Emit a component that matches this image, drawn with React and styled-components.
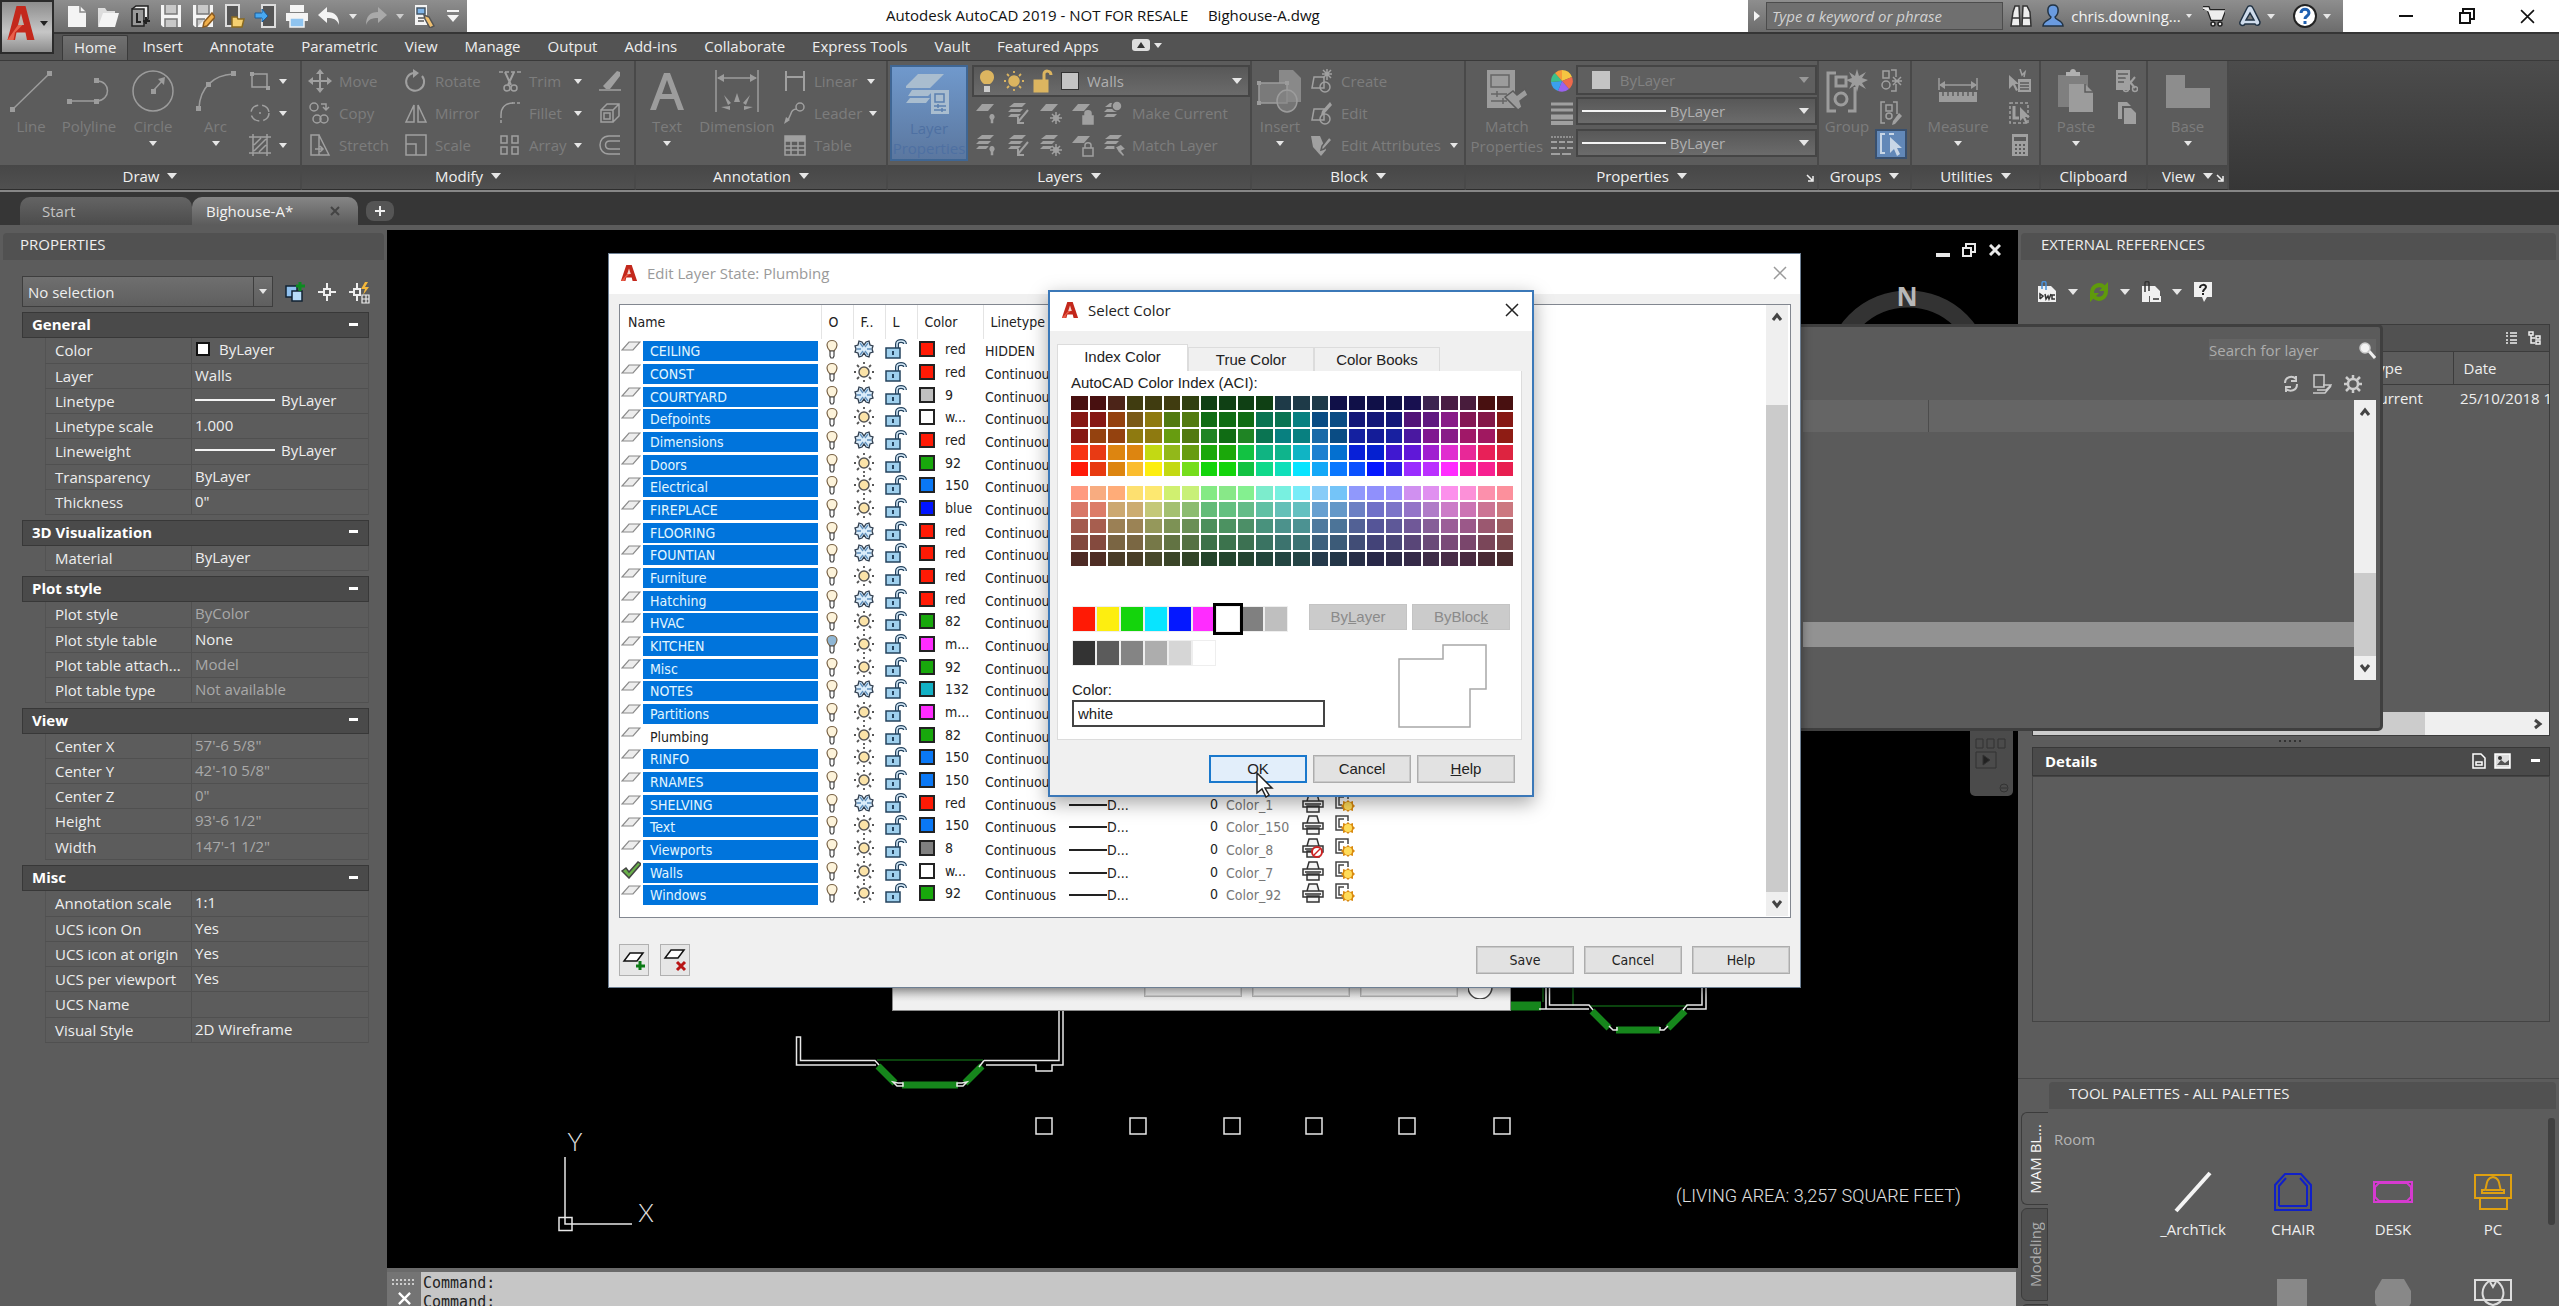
import React from "react";
import styled, { createGlobalStyle, css } from "styled-components";

const UI = `"Open Sans", "Noto Sans", sans-serif`;
const LIST = `"DejaVu Sans Condensed", "Noto Sans", sans-serif`;
const CLASSIC = `"Liberation Sans", Arial, sans-serif`;

const Global = createGlobalStyle`
  *, *::before, *::after { box-sizing: border-box; }
  html, body { margin: 0; height: 100%; overflow: hidden; background: #363636; }
  button, input, select { font: inherit; color: inherit; margin: 0; padding: 0; border: 0; background: none; border-radius: 0; }
  button { display: inline-flex; align-items: center; justify-content: center; white-space: nowrap; }
  select { appearance: none; }
  svg { display: block; flex: none; }
  table { border-collapse: collapse; border-spacing: 0; }
`;

/* ---------- shared pieces ---------- */

const Svg = ({ w = 24, h = w, vb, children, ...rest }) => (
  <svg width={w} height={h} viewBox={vb || `0 0 ${w} ${h}`} fill="none" stroke="currentColor" strokeWidth="1.5" aria-hidden="true" {...rest}>
    {children}
  </svg>
);

const Caret = styled.span`
  flex: none;
  width: 0;
  height: 0;
  border: ${(p) => p.$s || 4}px solid transparent;
  border-top: ${(p) => (p.$s || 4) + 1}px solid ${(p) => p.$c || "#e6e6e6"};
  border-bottom: 0;
`;

/* ---------- frame ---------- */

const Frame = styled.div`
  position: relative;
  height: 100vh;
  display: flex;
  flex-direction: column;
  font: 15px/20px ${UI};
  color: #eee;
  background: #5c5c5c;
`;

const TitleBar = styled.header`
  display: flex;
  height: 32px;
  flex: none;
  background: #fff;
`;
const metal = css`background: linear-gradient(#8e8e8e, #6c6c6c);`;
const QuickBar = styled.div`
  ${metal}
  display: flex;
  align-items: center;
  width: 467px;
  padding-left: 61px;
  color: #f4f4f4;
`;
const QuickButton = styled.button`
  width: ${(p) => p.$w || 32}px;
  height: 32px;
  color: ${(p) => (p.$dim ? "#a9a9a9" : "#f4f4f4")};
`;
const WindowTitle = styled.h1`
  flex: 1;
  margin: 0;
  padding-left: 419px;
  font: 15px/30px ${UI};
  color: #111;
  white-space: pre;
`;
const InfoBar = styled.div`
  ${metal}
  display: flex;
  align-items: center;
  width: 595px;
  color: #f4f4f4;
`;
const SearchInput = styled.input`
  width: 239px;
  height: 28px;
  margin-right: 2px;
  padding-left: 5px;
  border: 1px solid #4c4c4c;
  background: #6f6f6f;
  font-style: italic;
  &::placeholder { color: #d2d2d2; }
`;
const InfoButton = styled.button`
  width: ${(p) => p.$w || 32}px;
  height: 30px;
  gap: 5px;
`;
const WindowButtons = styled.div`
  display: flex;
  width: 216px;
  padding-left: 32px;
  color: #111;
  button { width: 61px; height: 32px; }
`;

const AppMenu = styled.button`
  position: absolute;
  z-index: 2;
  left: 0;
  top: 0;
  width: 54px;
  height: 54px;
  border: 2px solid #2b2b2b;
  background: linear-gradient(#8d8d8d, #c6c6c6 60%, #8c8c8c);
  gap: 4px;
  padding-bottom: 8px;
`;

const MenuBar = styled.nav`
  display: flex;
  align-items: flex-end;
  flex: none;
  height: 28px;
  padding-left: 62px;
  background: #535353;
  border-top: 2px solid #353535;
`;
const MenuTab = styled.button`
  height: 25px;
  margin-right: 1px;
  padding: 0 13px 4px;
  ${(p) => p.$on && css`
    padding: 0 11px 3px;
    margin-right: 1px;
    background: linear-gradient(#707070, #5f5f5f);
    border: 1px solid #3a3a3a;
    border-bottom: 0;
    border-radius: 2px 2px 0 0;
  `}
`;

/* ---------- ribbon ---------- */

const Ribbon = styled.section`
  display: flex;
  flex: none;
  height: 132px;
  background: linear-gradient(#4c4c4c, #363636);
  border-top: 1px solid #3a3a3a;
  border-bottom: 2px solid #868686;
`;
const Panel = styled.section`
  display: flex;
  flex-direction: column;
  width: ${(p) => p.$w}px;
  background: #5c5c5c;
  border-right: 2px solid #494949;
  border-bottom: 1px solid #2e2e2e;
`;
const PanelBody = styled.div`
  display: flex;
  flex: 1;
  padding: 4px 0 0 ${(p) => p.$pad || 0}px;
  color: #7d7d7d;
`;
const PanelTitle = styled.button`
  position: relative;
  height: 24px;
  padding-bottom: 2px;
  gap: 8px;
  color: #f0f0f0;
  background: linear-gradient(#474747, #505050);
  svg { position: absolute; right: 3px; top: 9px; }
`;
const BigButton = styled.button`
  width: ${(p) => p.$w}px;
  height: 96px;
  flex-direction: column;
  justify-content: flex-start;
  line-height: 20px;
  color: #7d7d7d;
  span.art { height: 51px; display: flex; align-items: center; color: #9c9c9c; }
  i { margin-top: 5px; }
  ${(p) => p.$blue && css`
    background: linear-gradient(#7099cc, #5b779f);
    border: 2px solid #3f6694;
    margin: 0 4px 0 2px;
    color: #4e70a2;
    span.art { color: #a9bdcf; }
  `}
`;
const Column = styled.div`
  display: flex;
  flex-direction: column;
  width: ${(p) => p.$w}px;
  margin-left: ${(p) => p.$ml || 0}px;
`;
const Tool = styled.button`
  height: 32px;
  justify-content: flex-start;
  gap: 7px;
  color: #7d7d7d;
  svg { color: #a0a0a0; }
  ${(p) => p.$blue && css`
    justify-content: center;
    height: 30px;
    border: 2px solid #39506e;
    background: #6288b8;
    svg { color: #c8d6e6; }
  `}
  ${(p) => p.$mid && css`justify-content: center;`}
`;
const ToolLabel = styled.span`
  flex: ${(p) => (p.$grow ? 1 : "none")};
  text-align: left;
`;
const ToolRow = styled.div`
  display: flex;
  padding-left: 3px;
  button { width: 32px; }
  button:last-child { width: auto; gap: 5px; }
`;
const Combo = styled.label`
  display: flex;
  align-items: center;
  height: ${(p) => p.$h || 28}px;
  margin-bottom: ${(p) => p.$mb || 0}px;
  padding: 0 6px 0 ${(p) => p.$pl || 4}px;
  gap: ${(p) => p.$gap || 8}px;
  border: 2px solid #454545;
  background: ${(p) => (p.$flat ? "#5f5f5f" : "linear-gradient(#585858, #6b6b6b)")};
  color: ${(p) => (p.$flat ? "#828282" : "#b0b0b0")};
  select { flex: 1; min-width: 0; }
`;
const Swatch = styled.span`
  width: 18px;
  height: 18px;
  background: #c4c4c4;
  border: 1px solid ${(p) => p.$b || "#c4c4c4"};
`;
const Rule = styled.span`
  flex: none;
  width: ${(p) => p.$w}px;
  height: 2px;
  background: ${(p) => p.$c || "#f4f4f4"};
`;

/* ---------- document tabs ---------- */

const DocTabs = styled.nav`
  display: flex;
  align-items: flex-end;
  flex: none;
  height: 38px;
  padding-left: 20px;
  background: #363636;
  border-bottom: 5px solid #5c5c5c;
`;
const DocTab = styled.button`
  width: ${(p) => p.$w}px;
  height: 28px;
  justify-content: space-between;
  padding: 0 18px 0 ${(p) => p.$pl}px;
  border-radius: 10px 10px 0 0;
  color: ${(p) => (p.$on ? "#f2f2f2" : "#c4c4c4")};
  background: ${(p) => (p.$on ? "linear-gradient(#868686, #5c5c5c)" : "linear-gradient(#646464, #4c4c4c)")};
`;
const AddTab = styled.button`
  width: 28px;
  height: 20px;
  margin: 0 0 4px 8px;
  border-radius: 8px;
  background: #555;
`;

/* ---------- palettes ---------- */

const Workspace = styled.main`
  display: grid;
  grid-template-columns: 387px minmax(0, 1fr) 541px;
  flex: 1;
  min-height: 0;
`;
const Palette = styled.aside`
  display: flex;
  flex-direction: column;
  min-height: 0;
  overflow: hidden;
  background: #5c5c5c;
`;
const PaletteTitle = styled.h2`
  flex: none;
  margin: 3px 3px 0 ${(p) => p.$ml || 3}px;
  height: 27px;
  padding-left: ${(p) => p.$pl || 17}px;
  background: #515151;
  border-radius: 4px 4px 0 0;
  font: 15px/23px ${UI};
  color: #eee;
`;
const SelectionBar = styled.div`
  display: flex;
  align-items: center;
  margin: 16px 12px 5px 22px;
  height: 31px;
  button { width: 32px; height: 30px; }
`;
const SelectionBox = styled.label`
  display: flex;
  align-items: center;
  width: 252px;
  height: 31px;
  margin-right: 6px;
  padding-right: 5px;
  border: 1px solid #3e3e3e;
  background: linear-gradient(#6f6f6f, #5f5f5f);
  select { flex: 1; height: 29px; padding-left: 5px; border-right: 1px solid #3e3e3e; margin-right: 5px; }
`;
const Section = styled.section`
  margin: 0 18px 5px 22px;
`;
const SectionHead = styled.h3`
  display: flex;
  justify-content: space-between;
  align-items: center;
  height: 26px;
  margin: 0;
  padding: 0 10px 2px 9px;
  border: 1px solid #383838;
  background: #4a4a4a;
  font: bold 15px/20px ${UI};
  color: #fff;
`;
const PropTable = styled.table`
  width: calc(100% - 23px);
  margin-left: 23px;
  table-layout: fixed;
  border-left: 1px solid #535353;
  tr { height: 25px; border-bottom: 1px solid #505050; }
  tr:nth-child(5n) { height: 26px; }
  th { width: 146px; padding: 0 0 0 9px; font-weight: 400; text-align: left; border-right: 1px solid #505050; white-space: nowrap; }
  td { padding: 0 0 0 3px; border-right: 1px solid #535353; }
`;
const Value = styled.span`
  display: flex;
  align-items: center;
  gap: ${(p) => p.$gap || 6}px;
  height: 20px;
  margin-bottom: 2px;
  color: ${(p) => (p.$dim ? "#a9a9a9" : "#eee")};
`;
const ColorBox = styled.span`
  width: 14px;
  height: 14px;
  margin-left: 1px;
  background: #fff;
  border: 2px solid #111;
`;

/* ---------- drawing ---------- */

const Center = styled.div`
  display: flex;
  flex-direction: column;
  min-width: 0;
`;
const Canvas = styled.div`
  position: relative;
  flex: 1;
  min-height: 0;
  overflow: hidden;
  background: #000;
  svg.plan { width: 100%; height: 100%; }
`;
const DocButtons = styled.div`
  position: absolute;
  right: 10px;
  top: 9px;
  display: flex;
  color: #e8e8e8;
  button { width: 26px; height: 22px; }
`;
const CommandLine = styled.div`
  display: flex;
  flex: none;
  height: 38px;
  margin-right: 2px;
  border-top: 4px solid #6a6a6a;
  background: #c6c6c6;
  overflow: hidden;
`;
const CommandGrip = styled.div`
  display: flex;
  flex-direction: column;
  align-items: center;
  gap: 6px;
  width: 34px;
  padding-top: 6px;
  background: #747474;
  color: #fff;
`;
const CommandText = styled.pre`
  margin: 2px 0 0 2px;
  font: 15px/19px "DejaVu Sans Mono", monospace;
  color: #222;
`;

/* ---------- right column ---------- */

const RefToolbar = styled.div`
  display: flex;
  align-items: center;
  height: 64px;
  padding: 0 0 0 15px;
  button { width: 28px; height: 26px; }
  button.more { width: 24px; }
`;
const RefBox = styled.div`
  display: flex;
  flex-direction: column;
  height: 412px;
  margin: 0 9px 0 14px;
  border: 1px solid #3c3c3c;
  overflow: hidden;
`;
const RefViews = styled.div`
  display: flex;
  justify-content: flex-end;
  align-items: center;
  gap: 10px;
  height: 27px;
  padding-right: 8px;
  background: #515151;
  border-bottom: 1px solid #3c3c3c;
`;
const RefTable = styled.table`
  width: 100%;
  table-layout: fixed;
  text-align: left;
  th { height: 32px; padding-bottom: 1px; font-weight: 400; border-bottom: 1px solid #3c3c3c; }
  th + th { border-left: 1px solid #3c3c3c; padding-left: 10px; }
  td { height: 28px; white-space: nowrap; padding: 0 0 0 7px; }
  th:first-child, td:first-child { padding-left: 336px; }
`;
const HScroll = styled.div`
  display: flex;
  align-items: center;
  justify-content: flex-end;
  height: 23px;
  margin-top: auto;
  padding-right: 5px;
  color: #444;
  background: linear-gradient(90deg, #ccc 392px, #efefef 392px);
`;
const Splitter = styled.div`
  display: flex;
  align-items: center;
  justify-content: center;
  height: 11px;
  margin: 0 9px 0 14px;
`;
const DetailsHead = styled.h3`
  display: flex;
  align-items: center;
  gap: 8px;
  height: 29px;
  margin: 0 9px 0 14px;
  padding: 0 8px 2px 12px;
  border: 1px solid #383838;
  background: #4a4a4a;
  font: bold 15px/20px ${UI};
  color: #fff;
  span { flex: 1; }
`;
const DetailsBody = styled.div`
  height: 246px;
  margin: 0 9px 56px 14px;
  border: 1px solid #444;
`;
const ToolPalette = styled.section`
  display: flex;
  flex: 1;
  min-height: 0;
  border-top: 1px solid #484848;
`;
const SideTabs = styled.div`
  width: 30px;
  padding: 33px 0 0 3px;
`;
const SideTab = styled.button`
  width: 27px;
  height: 93px;
  writing-mode: vertical-rl;
  font: 15px/24px ${UI};
  border: 1px solid #3c3c3c;
  border-radius: 6px 0 0 6px;
  color: ${(p) => (p.$on ? "#f4f4f4" : "#ababab")};
  background: ${(p) => (p.$on ? "#5c5c5c" : "#505050")};
  border-right: ${(p) => (p.$on ? 0 : 1)}px solid #3c3c3c;
  span { transform: rotate(180deg); }
`;
const ToolArea = styled.div`
  flex: 1;
  min-width: 0;
`;
const ToolGroup = styled.p`
  margin: 20px 0 16px 6px;
  color: #b4b4b4;
`;
const ToolGrid = styled.div`
  display: grid;
  grid-template-columns: repeat(4, 100px);
  padding-left: 95px;
  row-gap: 32px;
  button { flex-direction: column; height: 80px; justify-content: flex-start; color: #eee; }
  button span { display: flex; height: 54px; align-items: center; }
`;
const ToolBody = styled.div`
  display: flex;
  justify-content: space-between;
`;
const ToolThumb = styled.div`
  width: 7px;
  height: 107px;
  margin: 9px 4px 0 0;
  border-radius: 3px;
  background: #404040;
`;

/* ---------- floating windows ---------- */

const LayerManager = styled.section`
  position: absolute;
  left: 1790px;
  top: 324px;
  width: 593px;
  height: 407px;
  padding: 0 4px 0 10px;
  display: flex;
  flex-direction: column;
  background: #5b5b5b;
  border: 3px solid #3f3f3f;
  border-radius: 0 5px 5px 0;
`;
const LayerSearch = styled.label`
  display: flex;
  align-items: center;
  align-self: flex-end;
  width: 167px;
  height: 21px;
  margin: 12px 0 0 0;
  background: #646464;
  input { flex: 1; min-width: 0; &::placeholder { color: #adadad; } }
`;
const LayerTools = styled.div`
  display: flex;
  justify-content: flex-end;
  align-items: center;
  height: 40px;
  padding: 8px 8px 0 0;
  color: #ccc;
  button { width: 31px; height: 26px; }
`;
const LayerList = styled.div`
  display: flex;
  height: 280px;
`;
const LayerRows = styled.div`
  flex: 1;
`;
const LayerHeader = styled.div`
  height: 32px;
  margin-bottom: 190px;
  background: linear-gradient(90deg, #656565 125px, #4c4c4c 125px, #4c4c4c 126px, #656565 126px);
`;
const LayerHit = styled.div`
  height: 25px;
  background: #929292;
`;
const VScroll = styled.div`
  display: flex;
  flex-direction: column;
  justify-content: space-between;
  align-items: center;
  width: 22px;
  padding: 6px 0;
  color: #444;
  background: linear-gradient(#efefef ${(p) => p.$a}px, #cbcbcb ${(p) => p.$a}px, #cbcbcb ${(p) => p.$b}px, #efefef ${(p) => p.$b}px);
`;

const StatesDialog = styled.section`
  position: absolute;
  left: 892px;
  top: 960px;
  width: 619px;
  height: 51px;
  display: flex;
  align-items: flex-start;
  justify-content: flex-end;
  gap: 10px;
  padding: 8px 0 0 0;
  background: linear-gradient(#cfcfcf 26px, #f0f0f0 40px);
  border: 1px solid #8a8a8a;
  color: #222;
`;
const EditDialog = styled.section`
  position: absolute;
  left: 608px;
  top: 253px;
  width: 1193px;
  height: 735px;
  display: flex;
  flex-direction: column;
  background: #f0f0f0;
  border: 1px solid #6d7f93;
  box-shadow: 0 2px 10px rgba(0, 0, 0, 0.45);
  font: 14px/18px ${LIST};
  color: #222;
`;
const DialogTitle = styled.h2`
  display: flex;
  align-items: center;
  gap: 9px;
  height: ${(p) => p.$h}px;
  margin: 0;
  padding: 0 10px 3px 11px;
  background: #fff;
  font: 15px/20px ${UI};
  color: ${(p) => (p.$off ? "#9a9a9a" : "#222")};
  span { flex: 1; }
  button { width: 20px; height: 20px; }
`;
const ListFrame = styled.div`
  display: flex;
  justify-content: space-between;
  height: 614px;
  margin: 10px 9px 0 10px;
  padding: 0 2px 1px 1px;
  border: 1px solid #828790;
  background: #fff;
`;
const LayerTable = styled.table`
  width: 744px;
  height: 100px;
  table-layout: fixed;
  th { height: 34px; padding: 0 0 0 7px; font-weight: 400; text-align: left; border-right: 1px solid #e4e4e4; white-space: nowrap; }
  th:nth-child(n + 6) { border-right: 0; }
  tbody tr { height: 23px; }
  tbody tr:nth-child(3n) { height: 22px; }
  td { padding: 0; white-space: nowrap; overflow: hidden; vertical-align: top; }
  td:nth-child(3) { padding-left: 4px; }
`;
const NameTag = styled.span`
  display: block;
  height: 20px;
  margin: 2px 3px 0 0;
  padding-left: 7px;
  line-height: 21px;
  color: ${(p) => (p.$plain ? "#222" : "#e2f6ff")};
  background: ${(p) => (p.$plain ? "#fff" : "#0074dc")};
`;
const CellText = styled.span`
  display: flex;
  align-items: center;
  height: 20px;
  padding-left: ${(p) => p.$pl || 0}px;
  color: ${(p) => p.$c || "#222"};
  margin-top: ${(p) => p.$mt || 0}px;
`;
const Chip = styled.span`
  width: 16px;
  height: 16px;
  margin-right: 10px;
  border: 2px solid #222;
  background: ${(p) => p.$c};
`;
const DialogFoot = styled.footer`
  display: flex;
  align-items: center;
  gap: 10px;
  padding: 26px 10px 0 10px;
  div { flex: 1; display: flex; gap: 11px; }
`;
const IconButton = styled.button`
  width: 30px;
  height: 32px;
  border: 1px solid #b0b0b0;
  background: #e6e6e6;
`;
const PushButton = styled.button`
  width: 98px;
  height: 28px;
  border: 1px solid #adadad;
  background: #e2e2e2;
  box-shadow: inset 0 0 0 1px #c8c8c8;
  color: #222;
  ${(p) => p.$focus && css`
    border: 2px solid #1a78cc;
    background: #e2eefa;
    box-shadow: none;
  `}
  ${(p) => p.$off && css`
    height: 26px;
    border-color: #c4c4c4;
    background: #cbcbcb;
    box-shadow: none;
    color: #8a8a8a;
  `}
`;

const ColorDialog = styled.section`
  position: absolute;
  left: 1048px;
  top: 290px;
  width: 486px;
  height: 507px;
  display: flex;
  flex-direction: column;
  border: 2px solid #3b78b8;
  background: #f0f0f0;
  box-shadow: 0 6px 18px rgba(0, 0, 0, 0.35);
  font: 15px/18px ${CLASSIC};
  color: #222;
`;
const ColorTabs = styled.div`
  display: flex;
  align-items: flex-end;
  height: 40px;
  padding-left: 7px;
`;
const ColorTab = styled.button`
  width: ${(p) => p.$w}px;
  height: ${(p) => (p.$on ? 27 : 24)}px;
  padding-bottom: ${(p) => (p.$on ? 3 : 0)}px;
  border: 1px solid #dcdcdc;
  border-bottom: 0;
  background: ${(p) => (p.$on ? "#fff" : "#f0f0f0")};
`;
const ColorPage = styled.div`
  height: 369px;
  margin: 0 10px 0 7px;
  padding: 3px 7px 0 13px;
  border: 1px solid #dcdcdc;
  border-top: 0;
  background: #fff;
`;
const AciLabel = styled.p`
  margin: 0 0 4px;
`;
const Aci = styled.div`
  display: grid;
  grid-template-columns: repeat(24, 1fr);
  grid-template-rows: repeat(5, 1fr);
  gap: 2px;
  height: 80px;
  margin: 0 1px 10px 0;
`;
const AciCell = styled.button`
  background: ${(p) => p.$c};
`;
const PickArea = styled.div`
  display: flex;
  justify-content: space-between;
  padding: 28px 4px 0 1px;
`;
const PickLeft = styled.div`
  width: 214px;
  padding-top: 3px;
  label { display: flex; flex-direction: column; width: 253px; gap: 1px; margin-top: 16px; }
  input { height: 27px; padding-left: 4px; border: 2px solid #444; background: #fff; }
`;
const PickRight = styled.div`
  display: flex;
  flex-direction: column;
  align-items: flex-end;
  gap: 14px;
  > svg { margin-right: 22px; }
`;
const BasicColors = styled.div`
  display: grid;
  grid-template-columns: repeat(9, 22px);
  gap: 10px 2px;
  padding-left: 1px;
`;
const BasicCell = styled.button`
  height: 24px;
  background: ${(p) => p.$c};
  box-shadow: 0 0 0 1px #eee;
  ${(p) => p.$on && css`outline: 3px solid #000; outline-offset: 1px; z-index: 1;`}
`;
const ByButtons = styled.div`
  display: flex;
  gap: 5px;
`;
const ColorFoot = styled.div`
  display: flex;
  justify-content: flex-end;
  gap: 6px;
  padding: 15px 17px 0 0;
`;
const Pointer = styled.div`
  position: absolute;
  left: 1256px;
  top: 772px;
`;

/* ---------- icons ---------- */

const F = { fill: "currentColor", stroke: "none" };

const Logo = ({ w = 20 }) => (
  <Svg w={w} h={w} vb="0 0 20 20" stroke="none">
    <path d="M1 19 7 1h6l6 18h-5l-1-4H7l-1 4z" fill="#c3281c" />
    <path d="M8 11h4l-2-6z" fill="#f5d6cf" />
    <path d="M1 19 8 11h3L6 15l-1 4z" fill="#e85a45" />
  </Svg>
);
const Close = ({ w = 14, s = 1.5 }) => (
  <Svg w={w} vb="0 0 14 14" strokeWidth={s}><path d="M1 1 13 13M13 1 1 13" /></Svg>
);
const Chev = ({ d = "up" }) => {
  const r = { up: 0, right: 90, down: 180 }[d];
  return <Svg w={12} vb="0 0 12 12" strokeWidth="3"><path d="M2 9 6 4 10 9" transform={`rotate(${r} 6 6)`} /></Svg>;
};
const Launch = () => <Svg w={8} h={8} strokeWidth="1.5"><path d="M1 1 6 6M7 2v5H2" /></Svg>;
const Minus = () => <Svg w={9} h={3}><rect width="9" height="3" {...F} /></Svg>;

const art = {
  line: <Svg w={42} h={42}><path d="M3 39 39 4" /><path d="M0 37h5v5H0zM37 1h5v5h-5z" {...F} /></Svg>,
  pline: <Svg w={44} h={42}><path d="M2 31h28c14-1 14-20 0-20" /><path d="M0 29h5v5H0zM27 29h5v5h-5zM27 8h5v5h-5z" {...F} /></Svg>,
  circle: <Svg w={44} h={44}><circle cx="22" cy="22" r="20" /><path d="M22 22 32 11" /><path d="M20 20h5v5h-5zM34 8l-1 8-6-6z" {...F} /></Svg>,
  arc: <Svg w={42} h={42}><path d="M4 38C5 18 18 5 38 4" /><path d="M1 36h5v5H1zM11 12h5v5h-5zM36 1h5v5h-5z" {...F} /></Svg>,
  text: <Svg w={36} h={42}><path d="M1 40 15 3h6l14 37h-6l-4-11H11L7 40zM13 24h10L18 10z" {...F} fillRule="evenodd" /></Svg>,
  dim: <Svg w={44} h={44}><path d="M1 1v42M43 1v42M3 9h38" /><path d="m2 9 7-4v8zM42 9l-7-4v8z" {...F} /><path d="m22 24 3 9h-6zM9 26l7 8-3 2zM35 26l-7 8 3 2zM6 38l9-1v4zM38 38l-9-1v4z" {...F} /></Svg>,
  layerProps: <Svg w={46} h={46}><path d="M12 4h26L24 18H-2zM6 20h22l-6 6H2zM4 28h20l-4 5H0z" {...F} /><rect x="25" y="20" width="18" height="24" {...F} /><path d="M29 24h9v8h-9zM28 36h12M28 40h12M32 34v4M36 38v4" stroke="#5b80b0" /></Svg>,
  insert: <Svg w={46} h={44}><path d="M22 1h14l8 8v24H22z" {...F} opacity=".7" /><path d="M2 14h28v20H2z" fill="#7a7a7a" /><ellipse cx="30" cy="32" rx="10" ry="11" fill="#858585" fillOpacity=".6" /><path d="M0 12h4v4H0zM28 12h4v4h-4zM0 32h4v4H0z" {...F} /></Svg>,
  match: <Svg w={44} h={44}><path d="M2 1h28v38H2z" {...F} /><path d="M6 6h18v12H6zM6 25h16M6 32h16M12 22v6M18 29v6" stroke="#666" /><path d="m20 28 8-6 4 4 8-6 3 6-8 6 2 6-4 3z" {...F} stroke="#5c5c5c" /></Svg>,
  group: <Svg w={42} h={44}><path d="M10 4H2v38h8M22 42h7V18" strokeWidth="3" /><path d="M10 8h10v9H10z" strokeWidth="3" /><circle cx="15" cy="30" r="6" strokeWidth="3" /><path d="m31 0 2 7 7-4-4 6 6 2-6 3 4 6-7-4-2 7-2-7-6 4 3-6-6-3 6-2-3-6 6 4z" {...F} /></Svg>,
  measure: <Svg w={40} h={26}><path d="M1 0v12M39 0v12M2 7h36" /><path d="m1 7 6-4v8zM39 7l-6-4v8z" {...F} /><path d="M1 14h38v10H1z" {...F} /><path d="M5 14v4M10 14v4M15 14v4M20 14v4M25 14v4M30 14v4M35 14v4" stroke="#5c5c5c" /></Svg>,
  paste: <Svg w={38} h={44}><path d="M1 6h30v32H1z" {...F} opacity=".55" /><path d="M9 3h4c0-4 6-4 6 0h4v4H9z" {...F} fill="#b0b0b0" /><path d="M12 15h16l8 8v20H12z" {...F} /><path d="M28 15v8h8" stroke="#5c5c5c" /></Svg>,
  base: <Svg w={44} h={34}><path d="M0 1h19v13h25v20H0z" {...F} fill="#8d8d8d" /></Svg>,
};

const tool = {
  rect: <Svg><path d="M4 5h15v13H4z" /><path d="M2 3h4v4H2zM18 17h4v4h-4z" {...F} /></Svg>,
  ellipse: <Svg><ellipse cx="12" cy="12" rx="9" ry="8" strokeDasharray="10 4" /><circle cx="12" cy="12" r="1" {...F} /></Svg>,
  hatch: <Svg><path d="M5 1v22M19 1v22M1 4h22M1 20h22M6 12l7-7M6 18 18 6M11 19l7-7" /></Svg>,
  move: <Svg><path d="M12 3v18M3 12h18" strokeWidth="2" /><path d="m12 0 4 5H8zM12 24l4-5H8zM0 12l5-4v8zM24 12l-5-4v8z" {...F} /></Svg>,
  copy: <Svg><circle cx="6" cy="6" r="4" /><path d="M13 3h5v5M15 6l3 3 3-3" /><circle cx="9" cy="18" r="4" /><circle cx="16" cy="18" r="4" /></Svg>,
  stretch: <Svg><path d="M3 2h8v20H3zM11 2l10 20H11M7 16h8m-3-3 3 3-3 3" /></Svg>,
  rotate: <Svg><path d="M9 4a9 9 0 1 0 9 3" strokeWidth="2" /><path d="M9 0v9l6-5z" {...F} /></Svg>,
  mirror: <Svg><path d="M10 4v17H2zM14 4v17h8z" /></Svg>,
  scale: <Svg><path d="M2 2h20v20H2zM2 11h10v11H2z" /></Svg>,
  trim: <Svg><path d="M1 3h22" strokeDasharray="4 2" /><path d="m7 3 6 13M16 3l-6 13" strokeWidth="2" /><circle cx="9" cy="19" r="3" /><circle cx="16" cy="19" r="3" /></Svg>,
  fillet: <Svg><path d="M22 2h-8M3 22v-8" strokeDasharray="3 2" /><path d="M3 14C3 6 8 2 15 2" /></Svg>,
  array: <Svg><path d="M3 3h6v7H3zM14 3h6v7h-6zM3 14h6v7H3zM14 14h6v7h-6z" /></Svg>,
  erase: <Svg><path d="m19 2 3 1v4L12 20H8l-3-3z" {...F} /><path d="M1 21h22" /></Svg>,
  explode: <Svg><path d="M3 9h12v12H3zM6 12h6v6H6zM3 9l6-6h12v12l-6 6M15 9l6-6" /></Svg>,
  offset: <Svg><path d="M22 3H11C-1 3-1 21 11 21h11M22 8H12c-6 0-6 8 0 8h10" /></Svg>,
  linear: <Svg><path d="M3 2v20M21 2v20M4 8h16" strokeWidth="2" /></Svg>,
  leader: <Svg><circle cx="17" cy="6" r="4" /><path d="M14 8c-7 0-5 6-10 12" /><path d="m1 23 2-7 4 3z" {...F} /></Svg>,
  table: <Svg><path d="M2 3h20v19H2zM2 8h20M2 13h20M2 17h20M8 8v14M15 8v14" /><path d="M2 3h20v5H2z" {...F} /></Svg>,
  create: <Svg><path d="M4 8h10v11H2z" /><circle cx="15" cy="18" r="5" /><path d="M17 0v11M12 5h10M13 1l8 8M21 1l-8 8" /></Svg>,
  edit: <Svg><path d="M4 8h10v11H2z" /><circle cx="15" cy="18" r="5" /><path d="m20 1 2 3-8 9-3 1 1-4z" {...F} /></Svg>,
  attr: <Svg><path d="M1 3h9l6 14-5 6L3 14z" {...F} /><path d="m19 4 3 3-8 9-3 1 1-4z" {...F} stroke="#5c5c5c" /></Svg>,
  weight: <Svg><path d="M1 3h22M1 9h22" strokeWidth="3" /><path d="M1 16h22" strokeWidth="5" /><path d="M1 22h22" strokeWidth="4" /></Svg>,
  ltype: <Svg><path d="M1 4h22" strokeDasharray="2 1" /><path d="M1 9h22M1 15h22" strokeDasharray="6 2" strokeWidth="2" /><path d="M1 21h22" strokeWidth="2" strokeDasharray="9 2" /></Svg>,
  ungroup: <Svg><path d="M4 2h6v7H4z" /><circle cx="7" cy="16" r="4" /><path d="M12 1h5v7M17 15v7h-5M13 12h10M14 8l8 8M22 8l-8 8" /></Svg>,
  gedit: <Svg><path d="M6 1H2v21h4M14 1h4v12M7 4h6v6H7z" /><circle cx="10" cy="15" r="3" /><path d="m20 12 3 3-7 8-3 1 1-4z" {...F} /></Svg>,
  gsel: <Svg><path d="M6 2H2v19h4M10 2h5" strokeWidth="2" /><path d="M11 5v16l4-4 3 7 3-2-3-6h5z" {...F} /></Svg>,
  qsel: <Svg><path d="M1 6v14l4-4 3 6 2-1-3-6h4z" {...F} /><path d="m12 0 2 6 3-3-1 5" /><path d="M10 10h13v13H10z" {...F} /><path d="M12 14h9M12 17h9M12 20h9" stroke="#5c5c5c" /></Svg>,
  selall: <Svg><path d="M2 2h18v20H2z" strokeDasharray="3 2" /><path d="M6 5v12h5" strokeWidth="3" /><path d="M12 6v14l3-3 3 6 2-1-3-6h5z" {...F} /></Svg>,
  calc: <Svg><path d="M4 1h16v22H4z" {...F} /><path d="M6 4h12v4H6zM7 11h2v2H7zM11 11h2v2h-2zM15 11h2v2h-2zM7 15h2v2H7zM11 15h2v2h-2zM15 15h2v2h-2zM7 19h2v2H7zM11 19h2v2h-2zM15 19h2v2h-2z" fill="#5c5c5c" stroke="none" /></Svg>,
  cut: <Svg><path d="M2 1h14v20H2z" {...F} /><path d="M4 5h10M4 9h8M4 13h6" stroke="#5c5c5c" /><path d="m12 8 9 11M21 8l-9 11" strokeWidth="2" /><circle cx="12" cy="20" r="2.500" /><circle cx="21" cy="20" r="2.500" /></Svg>,
  clip: <Svg><path d="M4 1h9l4 4H8v13H4z" {...F} /><path d="M10 7h7l5 5v11H10z" {...F} /></Svg>,
};
const LayTool = ({ n }) => (
  <Svg>
    <path d={n < 1 || n === 2 || n === 3 || n === 8 ? "M7 3h12l-6 7H1z" : "M7 2h12l-4 4H2zM4 8h12l-3 3H1zM4 13h10l-3 3H1z"} {...F} />
    {[0, 5].includes(n) && <path d="M17 12a4 4 0 0 0-2 7v4h4v-4a4 4 0 0 0-2-7z" {...F} stroke="#5c5c5c" />}
    {[1, 6].includes(n) && <path d="M21 9 11 21m0-5v6h6" strokeWidth="2" />}
    {[2, 7].includes(n) && <g><circle cx="17" cy="17" r="3" {...F} /><path d="M17 11v12M11 17h12M13 13l8 8M21 13l-8 8" /></g>}
    {[3, 8].includes(n) && <path d="M12 15h10v8H12zM14 15v-3c0-3 6-3 6 0v3" {...(n === 3 ? { fill: "currentColor" } : {})} />}
    {n === 4 && <circle cx="14" cy="5" r="5" {...F} stroke="#5c5c5c" />}
    {n === 9 && <path d="m12 14 6-3 5 5-4 2 3 4-2 2-5-5z" {...F} stroke="#5c5c5c" />}
  </Svg>
);

const Bulb = ({ off }) => (
  <Svg w={14} h={20} stroke="#7a6448" strokeWidth="1.200"><path d="M5 12C2 9 2 8 2 6c0-6 10-6 10 0 0 2 0 3-3 6z" fill={off ? "#8fb6d4" : "#fdf3da"} /><path d="M5 12h4v5l-1 2H6l-1-2z" fill="#fff" stroke="#444" /></Svg>
);
const Sun = ({ fill = "#fbe3a8", stroke = "#555" }) => (
  <Svg w={22} h={20} stroke={stroke}><path d="M11 0v2M11 18v2M1 10h2M19 10h2M4 3l2 2M18 3l-2 2M4 17l2-2M18 17l-2-2" strokeWidth="1.800" /><circle cx="11" cy="10" r="5" fill={fill} /></Svg>
);
const Flake = () => (
  <Svg w={22} h={20} stroke="#2f3d4e" strokeWidth="1.300"><path d="m6 2 3 1 2 3 2-3 3-1 1 4 3 1-1 3 1 3-3 1-1 4-3-1-2-3-2 3-3 1-1-4-3-1 1-3-1-3 3-1z" fill="#d9ecfa" /><path d="m7 4 3 4M15 4l-3 4M7 16l3-4M15 16l-3-4M4 10h4M14 10h4" stroke="#5f8fbd" /></Svg>
);
const Lock = () => (
  <Svg w={22} h={20} stroke="#24435e"><path d="M12 9V5c0-4 8-4 8 0" strokeWidth="4" /><path d="M12 9V5c0-4 8-4 8 0" stroke="#d8ecfa" strokeWidth="1.500" /><path d="M1 9h14v10H1z" fill="#9fd0ee" strokeWidth="1.500" /><path d="M8 12v4" strokeWidth="2" /></Svg>
);
const Sheet = () => <Svg w={20} h={14} stroke="#8a8a8a" strokeWidth="1.200"><path d="M8 3h11l-7 8H1z" fill="#ededed" /></Svg>;
const Tick = () => <Svg w={20} h={18} stroke="#444"><path d="m1 10 4-3 3 4 9-10 3 2L8 17z" fill="#69b04a" /></Svg>;
const Printer = ({ no }) => (
  <Svg w={22} h={20} stroke="#333"><path d="M5 8 7 1h8l2 7M1 8h20v6H1zM5 13h12v6H5z" fill="#f4f4f4" /><path d="M3 11h16" />{no && <g><circle cx="15" cy="14" r="5" fill="#fff" stroke="#c22" strokeWidth="2" /><path d="m12 17 6-6" stroke="#c22" /></g>}</Svg>
);
const NewVp = () => (
  <Svg w={20} h={20} stroke="#444"><path d="M8 15H1V1h12v5M9 4H4v8h3" /><path d="m13 7 2 2 3-1v3l2 2-2 2v3l-3-1-2 2-2-2-3 1v-3l-2-2 2-2V8l3 1z" fill="#d98a10" stroke="none" /><circle cx="13" cy="13" r="4" fill="#ffdc5a" stroke="none" /></Svg>
);

/* ---------- data ---------- */

const PROPS = [
  ["General", [["Color", "ByLayer", "box"], ["Layer", "Walls"], ["Linetype", "ByLayer", "rule"], ["Linetype scale", "1.000"], ["Lineweight", "ByLayer", "rule"], ["Transparency", "ByLayer"], ["Thickness", '0"']]],
  ["3D Visualization", [["Material", "ByLayer"]]],
  ["Plot style", [["Plot style", "ByColor", "dim"], ["Plot style table", "None"], ["Plot table attach...", "Model", "dim"], ["Plot table type", "Not available", "dim"]]],
  ["View", [["Center X", "57'-6 5/8\"", "dim"], ["Center Y", "42'-10 5/8\"", "dim"], ["Center Z", '0"', "dim"], ["Height", "93'-6 1/2\"", "dim"], ["Width", "147'-1 1/2\"", "dim"]]],
  ["Misc", [["Annotation scale", "1:1"], ["UCS icon On", "Yes"], ["UCS icon at origin", "Yes"], ["UCS per viewport", "Yes"], ["UCS Name", ""], ["Visual Style", "2D Wireframe"]]],
];

const RED = "#ff1a05", GREEN = "#18a80c", BLUE = "#0a78f5", MAG = "#ff2cff";
const LAYERS = [
  ["CEILING", 1, RED, "red", "HIDDEN"], ["CONST", 0, RED, "red"], ["COURTYARD", 1, "#bfbfbf", "9"], ["Defpoints", 0, "#fff", "w..."],
  ["Dimensions", 1, RED, "red"], ["Doors", 0, GREEN, "92"], ["Electrical", 0, BLUE, "150"], ["FIREPLACE", 0, "#0014ff", "blue"],
  ["FLOORING", 1, RED, "red"], ["FOUNTIAN", 1, RED, "red"], ["Furniture", 0, RED, "red"], ["Hatching", 1, RED, "red"],
  ["HVAC", 0, GREEN, "82"], ["KITCHEN", 0, MAG, "m..."], ["Misc", 0, GREEN, "92"], ["NOTES", 1, "#12b0c4", "132"],
  ["Partitions", 0, MAG, "m..."], ["Plumbing", 0, GREEN, "82"], ["RINFO", 0, BLUE, "150"], ["RNAMES", 0, BLUE, "150"],
  ["SHELVING", 1, RED, "red", 0, "Color_1"], ["Text", 0, BLUE, "150", 0, "Color_150"], ["Viewports", 0, "#808080", "8", 0, "Color_8"],
  ["Walls", 0, "#fff", "w...", 0, "Color_7"], ["Windows", 0, GREEN, "92", 0, "Color_92"],
];

const hex = (s) => s.split(" ").map((c) => `#${c}`);
const VIVID = [
  "481010 481010 4c2418 403c10 403c10 403c10 304010 0f4014 0f4014 0f4014 0f4014 1e3a48 1e3a48 1e3a48 101048 101048 101048 101048 181050 3c2450 481c44 481c3c 481010 481010",
  "861814 861814 94420f 7a5a18 8e7a10 527a10 527a10 106c14 106c14 106c14 0a7452 0a7452 088080 0a4c84 0a4c84 141878 141878 141878 521478 601880 881c88 841854 841848 861814",
  "861814 94420f 94420f 8e7a10 8e7a10 679c10 527a10 1f8424 106c14 1f8424 0a7452 088080 088080 1a6aa8 0a4c84 1420a0 141c98 1820a0 4a18a0 801890 881c88 a01868 a01860 8e1c14",
  "f83414 e83a14 dd8510 dd8510 c3d913 92b81a 679c10 1ba80a 1ba80a 12c242 10b482 0fb48c 10b4c4 1e80d0 0470d0 0820d8 0520d0 4018d0 6018d8 a020d0 e02ed0 e82898 e82058 dd2440",
  "ff1a08 e83a10 dd8510 fbbd2e fdee10 c3d913 76dd1c 14d40c 14d40c 12c242 10d98a 0fdfba 08e4ff 14a8f7 0a78ff 0a50ff 0518ff 2c1ee6 9a2cff bb30ff ff2cff f822a8 f82090 e81e50",
].map(hex);
const PALE = hex("ff9a80 f8ac80 ffac78 fde070 fde870 d0f070 c8f078 84ea84 88e888 84f090 7ceccc 78f0e0 78ecf8 88ccf8 74c4f8 9098fc 9090fc 9890fc d090f0 e090f0 fc90ec fc90d8 fc90ac fc909c");
const MUTED = hex("d87868 dc7c68 cca870 ccac70 c4c878 a4c070 8cbc70 64bc78 64c080 64bc88 60c0a4 64c0b8 64c0c0 68a0d0 6498c8 6c80c4 7070c8 7c74c8 9474c8 b07cc8 cc7cc8 cc74b4 cc7494 cc7880");
const shade = (c, k) => `rgb(${[1, 3, 5].map((i) => Math.round(parseInt(c.slice(i, i + 2), 16) * k)).join(",")})`;
const SOFT = [PALE, MUTED, MUTED.map((c) => shade(c, 0.76)), MUTED.map((c) => shade(c, 0.6)), MUTED.map((c) => shade(c, 0.36))];

/* ---------- sections ---------- */

function Title() {
  return (
    <TitleBar>
      <QuickBar>
        <QuickButton aria-label="New"><Svg><path d="M3 2h12l6 6v15H3z" {...F} /><path d="M15 2v6h6" stroke="#888" /></Svg></QuickButton>
        <QuickButton aria-label="Open"><Svg><path d="M2 22V4h7l2 3h8v4" {...F} opacity=".8" /><path d="M7 9h16l-4 14H2z" {...F} /></Svg></QuickButton>
        <QuickButton aria-label="Open from Vault"><Svg stroke="#222"><path d="M4 5 8 2h12v13l-4 4" fill="#eee" /><path d="M4 5h12v17H4z" fill="#999" /><path d="M9 9v9h4M18 13v7m-3-3h7" strokeWidth="2" /></Svg></QuickButton>
        <QuickButton aria-label="Save"><Svg><path d="M2 1h20v22H4l-2-2z" {...F} /><path d="M6 1v9h12V1M6 23v-8h12v8" fill="#c8c8c8" stroke="#777" /></Svg></QuickButton>
        <QuickButton aria-label="Save As"><Svg><path d="M2 1h20v22H4l-2-2z" {...F} /><path d="M6 1v9h12V1M6 23v-8h8" fill="#c8c8c8" stroke="#777" /><path d="m21 9 3 4-8 9-4 1 1-5z" fill="#f2b04a" stroke="#8a5a20" /></Svg></QuickButton>
        <QuickButton aria-label="Open from Web and Mobile"><Svg><path d="M4 1h13v21H4z" fill="#555" stroke="#ddd" strokeWidth="2" /><path d="M10 13h5l1 2h6l-2 8H10z" fill="#f5d070" stroke="#8a6a20" /></Svg></QuickButton>
        <QuickButton aria-label="Save to Web and Mobile"><Svg><path d="M8 1h13v22H8z" fill="#555" stroke="#ddd" strokeWidth="2" /><path d="M1 9h7V5l6 7-6 6v-4H1z" fill="#48a8f0" stroke="#1c5c98" strokeWidth="1" /></Svg></QuickButton>
        <QuickButton aria-label="Plot"><Svg><path d="M5 1h14v7H5zM1 9h22v8H1z" {...F} /><path d="M5 14h14v9H5z" fill="#8fc4f0" stroke="#f4f4f4" /></Svg></QuickButton>
        <QuickButton aria-label="Undo"><Svg><path d="M1 11 10 3v5c8 0 12 4 12 13-2-6-6-7-12-7v5z" {...F} /></Svg></QuickButton>
        <QuickButton $w={16} aria-label="Undo list"><Caret /></QuickButton>
        <QuickButton $dim aria-label="Redo"><Svg><path d="M23 11 14 3v5C6 8 2 12 2 21c2-6 6-7 12-7v5z" {...F} /></Svg></QuickButton>
        <QuickButton $w={16} aria-label="Redo list"><Caret $c="#ccc" /></QuickButton>
        <QuickButton aria-label="Match"><Svg><path d="M3 1h12v20H3z" {...F} /><path d="M5 4h8v6H5z" fill="#7fb4e8" stroke="#456" /><path d="M6 14h6M6 17h6" stroke="#555" /><path d="m12 11 5 2 5 9-4 2-5-9z" fill="#f0c070" stroke="#555" /></Svg></QuickButton>
        <QuickButton $w={28} aria-label="Customize"><Svg w={14} h={16}><path d="M1 3h12" strokeWidth="2" /><path d="M1 7h12l-6 7z" {...F} /></Svg></QuickButton>
      </QuickBar>
      <WindowTitle>{"Autodesk AutoCAD 2019 - NOT FOR RESALE     Bighouse-A.dwg"}</WindowTitle>
      <InfoBar>
        <InfoButton $w={18} aria-label="Collapse search"><Svg w={8} h={12}><path d="M1 1l6 5-6 5z" {...F} /></Svg></InfoButton>
        <SearchInput aria-label="Search help" placeholder="Type a keyword or phrase" />
        <InfoButton aria-label="Search"><Svg w={22} h={24} stroke="#333"><path d="M5 2h4l1 20H1L3 8zM13 2h4l3 6 1 14h-9z" fill="#eee" /><path d="M2 14h7M13 14h7" /></Svg></InfoButton>
        <InfoButton aria-label="Account"><Svg w={22} h={24} stroke="#234"><path d="M11 1c7 0 6 9 2 12 0 3 8 3 8 9H1c0-6 8-6 8-9C5 10 4 1 11 1z" fill="#6a9be0" /></Svg></InfoButton>
        <InfoButton $w={126}>chris.downing...<Caret $s={3} /></InfoButton>
        <InfoButton $w={40} aria-label="App store"><Svg w={22} h={22} stroke="#222"><path d="M0 3h5l4 11h9l3-8H6" stroke="#222" strokeWidth="4" /><path d="M0 3h5l4 11h9l3-8H6z" fill="#eee" stroke="#eee" strokeWidth="1.500" /><circle cx="10" cy="19" r="2" fill="#eee" /><circle cx="17" cy="19" r="2" fill="#eee" /></Svg></InfoButton>
        <InfoButton $w={46} aria-label="Stay connected"><Svg w={24} h={22} stroke="#234"><path d="M9 3c1-3 5-3 6 0l7 14c0 4-4 4-5 2H7c-2 3-6 1-5-2zM12 8 8 15h8z" fill="#cfdcec" fillRule="evenodd" /></Svg><Caret /></InfoButton>
        <InfoButton $w={64} aria-label="Help"><Svg w={26} h={26}><circle cx="13" cy="13" r="11" fill="#fff" stroke="#222" strokeWidth="2" /><path d="M9 10c0-5 8-5 8 0 0 3-4 3-4 6M13 18v3" stroke="#2060b0" strokeWidth="3" /></Svg><Caret /></InfoButton>
      </InfoBar>
      <WindowButtons>
        <button aria-label="Minimize"><Svg w={14} h={2}><rect width="14" height="2" {...F} /></Svg></button>
        <button aria-label="Restore"><Svg w={16} h={16} strokeWidth="2"><path d="M1 5h10v10H1zM4 5V1h11v10h-4" /></Svg></button>
        <button aria-label="Close"><Close w={15} /></button>
      </WindowButtons>
    </TitleBar>
  );
}

const Big = ({ a, label, w, more, blue }) => (
  <BigButton $w={w} $blue={blue}>
    <span className="art">{art[a]}</span>
    {label.split("|").map((t) => <span key={t}>{t}</span>)}
    {more && <Caret as="i" />}
  </BigButton>
);
const Small = ({ a, label, more, ...r }) => (
  <Tool aria-label={label ? undefined : a} {...r}>
    {tool[a]}{label && <ToolLabel $grow={more}>{label}</ToolLabel>}{more && <Caret />}
  </Tool>
);
const Head = ({ children, plain, launch }) => (
  <PanelTitle>{children}{!plain && <Caret $s={5} />}{launch && <Launch />}</PanelTitle>
);

function RibbonBar() {
  return (
    <Ribbon>
      <Panel $w={302}>
        <PanelBody $pad={3}>
          <Big a="line" label="Line" w={56} /><Big a="pline" label="Polyline" w={60} />
          <Big a="circle" label="Circle" w={68} more /><Big a="arc" label="Arc" w={57} more />
          <Column $w={50} $ml={4}><Small a="rect" more /><Small a="ellipse" more /><Small a="hatch" more /></Column>
        </PanelBody>
        <Head>Draw</Head>
      </Panel>
      <Panel $w={334}>
        <PanelBody $pad={6}>
          <Column $w={96}><Small a="move" label="Move" /><Small a="copy" label="Copy" /><Small a="stretch" label="Stretch" /></Column>
          <Column $w={94}><Small a="rotate" label="Rotate" /><Small a="mirror" label="Mirror" /><Small a="scale" label="Scale" /></Column>
          <Column $w={84}><Small a="trim" label="Trim" more /><Small a="fillet" label="Fillet" more /><Small a="array" label="Array" more /></Column>
          <Column $w={24} $ml={16}><Small a="erase" /><Small a="explode" /><Small a="offset" /></Column>
        </PanelBody>
        <Head>Modify</Head>
      </Panel>
      <Panel $w={252}>
        <PanelBody>
          <Big a="text" label="Text" w={62} more /><Big a="dim" label="Dimension" w={78} />
          <Column $w={92} $ml={7}><Small a="linear" label="Linear" more /><Small a="leader" label="Leader" more /><Small a="table" label="Table" /></Column>
        </PanelBody>
        <Head>Annotation</Head>
      </Panel>
      <Panel $w={364}>
        <PanelBody>
          <Big a="layerProps" label="Layer|Properties" w={78} blue />
          <Column $w={278}>
            <Combo $h={32} $pl={5}>
              <Svg w={16} h={24} stroke="none"><path d="M5 15C1 12 1 9 1 8c0-9 14-9 14 0 0 1 0 4-4 7z" fill="#dcb560" /><path d="M5 17h6v6H5z" fill="#ccc" /></Svg>
              <Sun fill="#dcb560" stroke="#dcb560" />
              <Svg w={20} h={24} stroke="#dcb560" strokeWidth="3"><path d="M11 12V5c0-4 7-4 7 1" /><path d="M2 12h12v10H2z" fill="#dcb560" /></Svg>
              <Swatch $b="#333" />
              <select aria-label="Layer"><option>Walls</option></select>
              <Caret $s={5} />
            </Combo>
            <ToolRow>
              {[0, 1, 2, 3].map((n) => <Tool key={n} aria-label={`Layer tool ${n + 1}`}><LayTool n={n} /></Tool>)}
              <Tool><LayTool n={4} />Make Current</Tool>
            </ToolRow>
            <ToolRow>
              {[5, 6, 7, 8].map((n) => <Tool key={n} aria-label={`Layer tool ${n + 1}`}><LayTool n={n} /></Tool>)}
              <Tool><LayTool n={9} />Match Layer</Tool>
            </ToolRow>
          </Column>
        </PanelBody>
        <Head>Layers</Head>
      </Panel>
      <Panel $w={214}>
        <PanelBody>
          <Big a="insert" label="Insert" w={56} more />
          <Column $w={148} $ml={2}><Small a="create" label="Create" /><Small a="edit" label="Edit" /><Small a="attr" label="Edit Attributes" more /></Column>
        </PanelBody>
        <Head>Block</Head>
      </Panel>
      <Panel $w={353}>
        <PanelBody>
          <Big a="match" label="Match|Properties" w={82} />
          <Column $w={24} $ml={2}>
            <Tool aria-label="Object color"><Svg stroke="none"><path d="M12 12V1a11 11 0 0 1 10 7z" fill="#f5c542" /><path d="m12 12 10-4a11 11 0 0 1-3 12z" fill="#ee6a4c" /><path d="m12 12 7 8a11 11 0 0 1-11 2z" fill="#9a62ee" /><path d="m12 12-4 10a11 11 0 0 1-7-9z" fill="#3aa0ee" /><path d="M12 12 1 13A11 11 0 0 1 5 4z" fill="#3cc08a" /><path d="M12 12 5 4a11 11 0 0 1 7-3z" fill="#f59a3a" /></Svg></Tool>
            <Small a="weight" /><Small a="ltype" />
          </Column>
          <Column $w={242} $ml={2}>
            <Combo $flat $h={30} $pl={14} $gap={10} $mb={2}><Swatch /><select aria-label="Object color"><option>ByLayer</option></select><Caret $s={5} $c="#999" /></Combo>
            <Combo $gap={4} $mb={4}><Rule $w={84} /><select aria-label="Lineweight"><option>ByLayer</option></select><Caret $s={5} /></Combo>
            <Combo $gap={4}><Rule $w={84} /><select aria-label="Linetype"><option>ByLayer</option></select><Caret $s={5} /></Combo>
          </Column>
        </PanelBody>
        <Head launch>Properties</Head>
      </Panel>
      <Panel $w={93}>
        <PanelBody>
          <Big a="group" label="Group" w={56} />
          <Column $w={32}><Small a="ungroup" $mid /><Small a="gedit" $mid /><Small a="gsel" $blue /></Column>
        </PanelBody>
        <Head>Groups</Head>
      </Panel>
      <Panel $w={129}>
        <PanelBody>
          <Big a="measure" label="Measure" w={92} more />
          <Column $w={32}><Small a="qsel" $mid /><Small a="selall" $mid /><Small a="calc" $mid /></Column>
        </PanelBody>
        <Head>Utilities</Head>
      </Panel>
      <Panel $w={107}>
        <PanelBody>
          <Big a="paste" label="Paste" w={70} more />
          <Column $w={30}><Small a="cut" $mid /><Small a="clip" $mid /></Column>
        </PanelBody>
        <Head plain>Clipboard</Head>
      </Panel>
      <Panel $w={81}>
        <PanelBody><Big a="base" label="Base" w={80} more /></PanelBody>
        <Head launch>View</Head>
      </Panel>
    </Ribbon>
  );
}

function Properties() {
  return (
    <Palette>
      <PaletteTitle>PROPERTIES</PaletteTitle>
      <SelectionBar>
        <SelectionBox>
          <select aria-label="Selection"><option>No selection</option></select>
          <Caret />
        </SelectionBox>
        <button aria-label="Toggle pick add"><Svg w={20} h={20} stroke="#123"><path d="M1 4h11v11H1z" fill="#8fc0ee" /><path d="M7 9h10v10H7z" fill="#b8dcf8" /><path d="M15 0v9M11 4h9" stroke="#0c8a20" strokeWidth="3" /></Svg></button>
        <button aria-label="Select objects"><Svg w={20} h={20} strokeWidth="2"><path d="M10 1v6M10 13v6M1 10h6M13 10h6M7 7h6v6H7z" /></Svg></button>
        <button aria-label="Quick select"><Svg w={22} h={24} strokeWidth="2"><path d="M9 3v6M9 15v6M1 12h5M6 9h6v6H6z" /><path d="M17 2l-4 7h4l-2 6 6-8h-4l3-5z" fill="#f5b83a" stroke="none" /><path d="M14 15h7v8h-7zM14 19h7M18 15v8" strokeWidth="1.200" /></Svg></button>
      </SelectionBar>
      {PROPS.map(([head, rows]) => (
        <Section key={head}>
          <SectionHead>{head}<Minus /></SectionHead>
          <PropTable>
            <tbody>
              {rows.map(([k, v, kind]) => (
                <tr key={k}>
                  <th scope="row">{k}</th>
                  <td>
                    <Value $dim={kind === "dim"} $gap={kind === "box" ? 9 : 6}>
                      {kind === "box" && <ColorBox />}
                      {kind === "rule" && <Rule $w={80} />}
                      {v}
                    </Value>
                  </td>
                </tr>
              ))}
            </tbody>
          </PropTable>
        </Section>
      ))}
    </Palette>
  );
}

function Plan() {
  const W = { stroke: "#e8e8e8", strokeWidth: 1.5 };
  const G = { stroke: "#16861c", strokeWidth: 7 };
  return (
    <svg className="plan" viewBox="387 230 1631 1038" preserveAspectRatio="xMinYMin slice" fill="none" aria-label="Floor plan">
      <circle cx="1908" cy="374" r="75" stroke="#333" strokeWidth="17" />
      <text x="1907" y="306" fill="#b8b8b8" fontFamily="Open Sans, sans-serif" fontWeight="700" fontSize="26" textAnchor="middle">N</text>
      <g stroke="#16861c">
        <path d="M877 1060H983M1590 1006H1688M1573 988V1006" />
        <path d="M878 1066 895 1083M902 1085H958M965 1083 982 1066M1592 1011 1609 1028M1616 1030H1660M1668 1028 1685 1011" {...G} />
        <path d="M1511 1006H1541" strokeWidth="9" />
        <path d="M1543 988V1002" />
      </g>
      <g {...W}>
        <path d="M876 1065H796.500V1037H800.500V1060.500H875L879 1065M984 1060.500H1059V1011M1063 1011V1065H1052V1071H1036V1065H986M984 1060.500 979 1067" />
        <path d="M893 1082l4 4h6v-3h-5zM967 1082l-4 4h-6v-3h5z" />
        {[1044, 1138, 1232, 1314, 1407, 1502].map((x) => <path key={x} d={`M${x - 8} 1118h16v16h-16z`} />)}
        <path d="M1546 988V1009M1549.500 988V1005H1589L1593 1010M1539 1009H1589M1702 988V1005H1687L1683 1010M1706 988V1009H1687" />
        <path d="M1609 1026l4 4h4v-3M1668 1026l-4 4h-4v-3" />
      </g>
      <path d="M565 1157V1224H632M559 1217.500H572V1230.500H559z" {...W} />
      <g fill="#e0e0e0" fontWeight="300">
        <text x="575" y="1151" fontSize="25" fontFamily="Lato, sans-serif" textAnchor="middle">Y</text>
        <text x="646" y="1222" fontSize="25" fontFamily="Lato, sans-serif" textAnchor="middle">X</text>
        <text x="1676" y="1202" fontSize="18" fontFamily="Roboto, sans-serif">(LIVING AREA: 3,257 SQUARE FEET)</text>
      </g>
      <g stroke="#333">
        <rect x="1970" y="700" width="43" height="96" rx="5" fill="#4b4b4b" stroke="none" />
        <path d="M1976 739h7v9h-7zM1987 739h7v9h-7zM1998 739h7v9h-7zM1976 752h20v16h-20z" />
        <path d="M1983 755l7 5-7 5z" fill="#222" />
        <circle cx="2004" cy="788" r="4" /><path d="M2001 788h6" />
      </g>
    </svg>
  );
}

function References() {
  return (
    <Palette>
      <PaletteTitle $pl={20}>EXTERNAL REFERENCES</PaletteTitle>
      <RefToolbar>
        <button aria-label="Attach"><Svg w={22} h={22} stroke="none"><path d="M2 5h13l5 5v11H2z" fill="#f0f0f0" /><path d="M4 18v-5l3 2-3 3M9 13l1 5 2-3 1 3 2-5M19 14h-3v4h3" stroke="#333" /><path d="M6 8V2c0-2 4-2 4 0v7" stroke="#4a90d8" strokeWidth="1.500" /></Svg></button>
        <button className="more" aria-label="Attach options"><Caret $s={5} /></button>
        <button aria-label="Refresh"><Svg w={22} h={22} stroke="#5f9a0c" strokeWidth="4"><path d="M4 12C4 5 11 2 16 6M18 10c0 7-7 10-12 6" /><path d="M20 1v9h-9zM2 21v-9h9z" fill="#5f9a0c" stroke="none" /></Svg></button>
        <button className="more" aria-label="Refresh options"><Caret $s={5} /></button>
        <button aria-label="Change path"><Svg w={22} h={22} stroke="none"><path d="M2 5h13l5 5v5H9v6H2z" fill="#f0f0f0" /><path d="M10 15h11v6H10z" fill="#f0f0f0" /><path d="M13 18h6M5 11V2c0-2 4-2 4 0v8" stroke="#333" /></Svg></button>
        <button className="more" aria-label="Path options"><Caret $s={5} /></button>
        <button aria-label="Help"><Svg w={20} h={22} stroke="none"><path d="M1 1h18v15h-5l-3 5-2-5H1z" fill="#f0f0f0" /><path d="M7 7c0-4 6-4 6-1 0 2-3 2-3 5M10 12v2" stroke="#222" strokeWidth="2" /></Svg></button>
      </RefToolbar>
      <RefBox>
        <RefViews>
          <Svg w={13} h={12}><path d="M1 1h2M5 1h7M1 4h2M5 4h7M1 8h2M5 8h7M1 11h2M5 11h7" /></Svg>
          <Svg w={13} h={14}><path d="M1 1h4v3H1zM3 4v8h4M3 7h4M8 5h4v3H8zM8 10h4v3H8z" /></Svg>
        </RefViews>
        <RefTable>
          <colgroup><col /><col style={{ width: 96 }} /></colgroup>
          <thead><tr><th>Type</th><th>Date</th></tr></thead>
          <tbody><tr><td>Current</td><td>25/10/2018 1</td></tr></tbody>
        </RefTable>
        <HScroll><Chev d="right" /></HScroll>
      </RefBox>
      <Splitter><Svg w={24} h={3} stroke="#333" strokeWidth="2"><path d="M0 1h24" strokeDasharray="2 3" /></Svg></Splitter>
      <DetailsHead>
        <span>Details</span>
        <Svg w={14} h={16}><path d="M1 1h8l4 4v10H1zM4 9h6v3H4z" /></Svg>
        <Svg w={17} h={16}><path d="M1 1h15v14H1z" fill="#ddd" /><path d="M3 12l4-5 4 3 4-3v5z" fill="#555" stroke="none" /><circle cx="6" cy="5" r="2" fill="#333" stroke="none" /></Svg>
        <Svg w={22} h={3}><rect x="12" width="9" height="3" {...F} /></Svg>
      </DetailsHead>
      <DetailsBody />
      <ToolPalette>
        <SideTabs>
          <SideTab $on><span>MAM BL...</span></SideTab>
          <SideTab><span>Modeling</span></SideTab>
          <SideTab aria-label="Next palette" />
        </SideTabs>
        <ToolArea>
          <PaletteTitle $ml={1} $pl={20}>TOOL PALETTES - ALL PALETTES</PaletteTitle>
          <ToolBody>
            <div>
              <ToolGroup>Room</ToolGroup>
              <ToolGrid>
                <button><span><Svg w={40} h={48} stroke="#f4f4f4" strokeWidth="4"><path d="M3 43 37 5" /></Svg></span>_ArchTick</button>
                <button><span><Svg w={38} h={40} stroke="#1020c8" strokeWidth="2"><path d="M1 38V13L11 2h16l10 11v25zM5 34V14l7-8M33 34V14l-7-8M5 34h28" /></Svg></span>CHAIR</button>
                <button><span><Svg w={40} h={22} stroke="#d63ad0" strokeWidth="2"><path d="M1 1h38v20H1z" /><path d="m2 6 4-4h28l4 4v10l-4 4H6l-4-4z" /></Svg></span>DESK</button>
                <button><span><Svg w={38} h={38} stroke="#dfa010" strokeWidth="2"><path d="M1 2h36v23H1zM6 25h27v11H6zM8 20h22v-3h-3c-2-2 0-12-8-13-8 1-6 11-8 13H8zM12 17h14" /></Svg></span>PC</button>
                <i />
                <button aria-label="Block 5"><Svg w={32} h={42}><path d="M0 2h30v42H0z" {...F} fill="#888" /></Svg></button>
                <button aria-label="Block 6"><Svg w={38} h={42}><path d="M8 2h22l7 12v12l-7 12H8L1 26V14z" {...F} fill="#888" /></Svg></button>
                <button aria-label="Block 7"><Svg w={38} h={42} stroke="#ddd"><path d="M1 3h36v20H1zM15 4c-10 8-8 22 4 24 12-2 14-16 4-24zM16 5l3 5 3-5" strokeWidth="2" /></Svg></button>
              </ToolGrid>
            </div>
            <ToolThumb />
          </ToolBody>
        </ToolArea>
      </ToolPalette>
    </Palette>
  );
}

function LayerPalette() {
  return (
    <LayerManager aria-label="Layer properties manager">
      <LayerSearch>
        <input aria-label="Search for layer" placeholder="Search for layer" />
        <Svg w={18} h={18}><path d="m10 9 7 8" stroke="#eee" strokeWidth="3" /><circle cx="7" cy="7" r="5" fill="#f4f4f4" stroke="#ccc" /></Svg>
      </LayerSearch>
      <LayerTools>
        <button aria-label="Refresh"><Svg w={16} h={18} strokeWidth="2"><path d="M2 8c0-6 7-8 11-4V1M14 9c0 7-7 8-11 5v3M8 6h6M2 12h6" /></Svg></button>
        <button aria-label="Toggle override highlight"><Svg w={20} h={20}><path d="M2 1h10v12H2zM5 16h9l5-5h-8M1 19h12l6-7" /></Svg></button>
        <button aria-label="Settings"><Svg w={20} h={20} strokeWidth="2.500"><circle cx="10" cy="10" r="5" /><path d="M10 1v4M10 15v4M1 10h4M15 10h4M3 3l3 3M14 14l3 3M17 3l-3 3M3 17l3-3" /></Svg></button>
      </LayerTools>
      <LayerList>
        <LayerRows><LayerHeader /><LayerHit /></LayerRows>
        <VScroll $a={173} $b={256}><Chev /><Chev d="down" /></VScroll>
      </LayerList>
    </LayerManager>
  );
}

function EditLayerState() {
  const cols = [22, 178, 32, 32, 32, 66, 86, 131, 22, 80, 33, 32];
  return (
    <EditDialog role="dialog" aria-label="Edit Layer State">
      <DialogTitle $h={40} $off><Logo w={18} /><span>Edit Layer State: Plumbing</span><button aria-label="Close"><Close /></button></DialogTitle>
      <ListFrame>
        <LayerTable>
          <colgroup>{cols.map((w, i) => <col key={i} style={{ width: w }} />)}</colgroup>
          <thead><tr><th colSpan={2}>Name</th><th>O</th><th>F..</th><th>L</th><th>Color</th><th>Linetype</th><th colSpan={5} /></tr></thead>
          <tbody>
            {LAYERS.map(([name, frozen, color, label, lt, style]) => (
              <tr key={name}>
                <td>{name === "Walls" ? <Tick /> : <Sheet />}</td>
                <td><NameTag $plain={name === "Plumbing"}>{name}</NameTag></td>
                <td><Bulb off={name === "KITCHEN"} /></td>
                <td>{frozen ? <Flake /> : <Sun />}</td>
                <td><Lock /></td>
                <td><CellText $pl={2}><Chip $c={color} />{label}</CellText></td>
                <td><CellText $pl={2} $mt={2}>{lt || "Continuous"}</CellText></td>
                {style && <>
                  <td><CellText $mt={2}><Rule $w={38} $c="#222" />D...</CellText></td>
                  <td><CellText $pl={10} $mt={1}>0</CellText></td>
                  <td><CellText $pl={4} $mt={2} $c="#777">{style}</CellText></td>
                  <td><Printer no={name === "Viewports"} /></td>
                  <td><NewVp /></td>
                </>}
              </tr>
            ))}
          </tbody>
        </LayerTable>
        <VScroll $a={100} $b={587}><Chev /><Chev d="down" /></VScroll>
      </ListFrame>
      <DialogFoot>
        <div>
          <IconButton aria-label="Add layer"><Svg w={24} stroke="#111"><path d="M8 5h13l-6 8H2z" fill="#fff" /><path d="M18 13v9M14 18h9" stroke="#0a7a14" strokeWidth="3" /></Svg></IconButton>
          <IconButton aria-label="Remove layer"><Svg w={24} stroke="#111"><path d="M8 2h13l-6 8H2z" fill="#fff" /><path d="m14 14 8 8M22 14l-8 8" stroke="#b81414" strokeWidth="3" /></Svg></IconButton>
        </div>
        <PushButton>Save</PushButton><PushButton>Cancel</PushButton><PushButton>Help</PushButton>
      </DialogFoot>
    </EditDialog>
  );
}

function SelectColor() {
  const basic = ["#ff1a05", "#fdee10", "#14d40c", "#08e4ff", "#0518ff", "#ff2cff", "#fff", "#808080", "#bfbfbf", "#333", "#5b5b5b", "#848484", "#adadad", "#d6d6d6", "#fff"];
  return (
    <ColorDialog role="dialog" aria-label="Select Color">
      <DialogTitle $h={39}><Logo w={18} /><span>Select Color</span><button aria-label="Close"><Close /></button></DialogTitle>
      <ColorTabs role="tablist">
        <ColorTab role="tab" $on $w={131}>Index Color</ColorTab>
        <ColorTab role="tab" $w={126}>True Color</ColorTab>
        <ColorTab role="tab" $w={126}>Color Books</ColorTab>
      </ColorTabs>
      <ColorPage>
        <AciLabel>AutoCAD Color Index (ACI):</AciLabel>
        <Aci>{VIVID.flat().map((c, i) => <AciCell key={i} $c={c} aria-label={`Vivid ${i + 1}`} />)}</Aci>
        <Aci>{SOFT.flat().map((c, i) => <AciCell key={i} $c={c} aria-label={`Soft ${i + 1}`} />)}</Aci>
        <PickArea>
          <PickLeft>
            <BasicColors>{basic.map((c, i) => <BasicCell key={i} $c={c} $on={i === 6} aria-label={`Basic ${i + 1}`} />)}</BasicColors>
            <label>Color:<input defaultValue="white" /></label>
          </PickLeft>
          <PickRight>
            <ByButtons><PushButton $off disabled><span>By<u>L</u>ayer</span></PushButton><PushButton $off disabled><span>ByBloc<u>k</u></span></PushButton></ByButtons>
            <Svg w={90} h={84} stroke="#a8a8a8" strokeWidth="1.500"><path d="M1 15h44V1h43v44H72v38H1z" /></Svg>
          </PickRight>
        </PickArea>
      </ColorPage>
      <ColorFoot>
        <PushButton $focus>OK</PushButton><PushButton>Cancel</PushButton><PushButton><span><u>H</u>elp</span></PushButton>
      </ColorFoot>
    </ColorDialog>
  );
}

const MENU = ["Insert", "Annotate", "Parametric", "View", "Manage", "Output", "Add-ins", "Collaborate", "Express Tools", "Vault", "Featured Apps"];

export default function App() {
  return (
    <Frame>
      <Global />
      <Title />
      <AppMenu aria-label="Application menu"><Svg w={30} h={38} vb="0 0 20 20" preserveAspectRatio="none" stroke="none"><path d="M1 19 7 1h6l6 18h-5l-1-4H7l-1 4z" fill="#c3281c" /><path d="M8 11h4l-2-6z" fill="#b9b4ae" /><path d="M1 19 8 11h3L6 15l-1 4z" fill="#e8604c" /></Svg><Caret $c="#222" /></AppMenu>
      <MenuBar>
        <MenuTab $on>Home</MenuTab>
        {MENU.map((m) => <MenuTab key={m}>{m}</MenuTab>)}
        <MenuTab aria-label="Minimize ribbon"><Svg w={28} h={14}><rect x="6" width="18" height="12" rx="3" {...F} fill="#ddd" /><path d="m15 3 4 6h-8z" fill="#333" stroke="none" /></Svg><Caret /></MenuTab>
      </MenuBar>
      <RibbonBar />
      <DocTabs>
        <DocTab $w={172} $pl={22}>Start</DocTab>
        <DocTab $w={166} $pl={14} $on>Bighouse-A*<Svg w={10} h={10} stroke="#444" strokeWidth="2"><path d="m1 1 8 8M9 1 1 9" /></Svg></DocTab>
        <AddTab aria-label="New drawing"><Svg w={12} h={12} strokeWidth="2"><path d="M6 1v10M1 6h10" /></Svg></AddTab>
      </DocTabs>
      <Workspace>
        <Properties />
        <Center>
          <Canvas>
            <Plan />
            <DocButtons>
              <button aria-label="Minimize drawing"><Svg w={14} h={14}><path d="M0 10h14v4H0z" {...F} /></Svg></button>
              <button aria-label="Restore drawing"><Svg w={14} h={14} strokeWidth="2"><path d="M1 5h8v8H1zM4 5V1h9v8H9" /></Svg></button>
              <button aria-label="Close drawing"><Svg w={12} h={12} strokeWidth="3"><path d="m1 1 10 10M11 1 1 11" /></Svg></button>
            </DocButtons>
          </Canvas>
          <CommandLine>
            <CommandGrip>
              <Svg w={24} h={8} stroke="#ccc" strokeWidth="2"><path d="M0 2h24M0 6h24" strokeDasharray="2 2" /></Svg>
              <Close w={13} s={2.5} />
            </CommandGrip>
            <CommandText>{"Command:\nCommand:"}</CommandText>
          </CommandLine>
        </Center>
        <References />
      </Workspace>
      <LayerPalette />
      <StatesDialog aria-label="Layer states manager">
        <PushButton aria-label="Restore" /><PushButton aria-label="Close" /><PushButton aria-label="Help" />
        <Svg w={42} h={30} stroke="#444"><circle cx="12" cy="18" r="12" fill="#fff" /></Svg>
      </StatesDialog>
      <EditLayerState />
      <SelectColor />
      <Pointer><Svg w={18} h={26} stroke="#222"><path d="M1 1v20l5-4 4 8 3-2-4-7h7z" fill="#fff" /></Svg></Pointer>
    </Frame>
  );
}
